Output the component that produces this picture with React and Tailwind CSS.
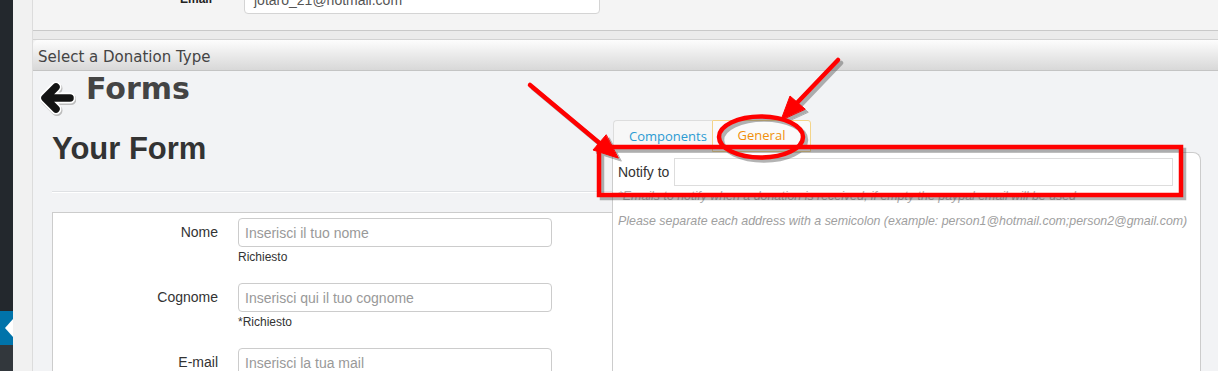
import React from "react";

// ─────────────────────────────────────
// Donation form builder screen + red annotation marks
// ─────────────────────────────────────

const sans = { fontFamily: '"Liberation Sans", Arial, sans-serif' };
const deja = { fontFamily: '"DejaVu Sans", Verdana, sans-serif' };
const open = { fontFamily: '"Open Sans", "Noto Sans", sans-serif' };

// red arrows / ellipse / box drawn over the screenshot
const Marks = ({ color }) => (
  <g stroke={color} fill={color} strokeLinecap="round" strokeLinejoin="round">
    <rect x="599" y="147" width="582" height="48" fill="none" strokeWidth="4.5" strokeLinecap="butt" strokeLinejoin="miter" />
    <ellipse cx="761" cy="137" rx="42" ry="20.5" fill="none" strokeWidth="4.5" />
    <line x1="530" y1="85" x2="603" y2="146" strokeWidth="4.5" />
    <polygon points="618,158 593,150 606,135" strokeWidth="1" />
    <line x1="838" y1="60" x2="795" y2="105" strokeWidth="4.5" />
    <polygon points="781,120 790,96 805,109" strokeWidth="1" />
  </g>
);

const BackArrow = () => (
  <svg className="block" width="38" height="36" viewBox="0 0 38 36">
    <g fill="none" strokeLinecap="round" strokeLinejoin="round">
      <path d="M32 17H8M18 6L7 17L18 28" stroke="#bdbdbd" strokeWidth="11" transform="translate(1 1.5)" />
      <path d="M32 17H8M18 6L7 17L18 28" stroke="#fff" strokeWidth="11" />
      <path d="M32 17H8M18 6L7 17L18 28" stroke="#141414" strokeWidth="7.5" />
    </g>
  </svg>
);

const Field = ({ label, placeholder, help }) => (
  <div className="flex items-start h-[65px]">
    <div className="w-[165px] h-[29px] flex items-center justify-end text-[14px] text-[#333]" style={sans}>
      {label}
    </div>
    <div className="ml-[20px] flex flex-col">
      <input
        placeholder={placeholder}
        className="w-[314px] h-[29px] px-[6px] bg-white border border-[#ccc] rounded-[4px] text-[14px] placeholder:text-[#999] outline-none"
        style={sans}
      />
      <p className="mt-[2px] h-[16px] text-[12px] leading-[16px] text-[#333]" style={sans}>
        {help}
      </p>
    </div>
  </div>
);

export default function App() {
  return (
    <div className="relative w-[1218px] h-[371px] overflow-hidden flex bg-[#f1f1f1]">
      {/* SIDEBAR admin */}
      <div className="w-[13px] shrink-0 flex flex-col bg-[#23282d]">
        <div className="h-[311px]" />
        <div className="h-[34px] bg-[#0073aa] flex items-center justify-end">
          <div className="w-0 h-0 border-y-[9px] border-y-transparent border-r-[8px] border-r-white" />
        </div>
        <div className="flex-1 bg-[#32373c]" />
      </div>

      <div className="ml-[19px] flex-1 min-w-0 flex flex-col border-l border-[#dcdcdc]">
        {/* TOP PANEL (email) */}
        <div className="h-[31px] shrink-0 flex items-start bg-[#f4f4f4] border-b border-[#c9c9c9]">
          <div className="w-[179px] -mt-[8px] text-right text-[12px] leading-[14px] font-bold text-[#222]" style={sans}>
            Email
          </div>
          <div className="ml-[32px] -mt-[15px] w-[356px] h-[29px] flex items-center pl-[9px] bg-white border border-[#d4d4d4] rounded-[4px] text-[14px] leading-[16px] text-[#555]" style={sans}>
            jotaro_21@hotmail.com
          </div>
        </div>
        <div className="h-[9px] shrink-0 bg-[#ebebeb] border-b border-[#d2d2d2]" />

        {/* DONATION PANEL */}
        <div className="h-[31px] shrink-0 rounded-tl-[5px] bg-gradient-to-b from-[#fdfdfd] to-[#d8d8d8] border-b border-[#c4c4c4] pl-[5px] pt-[8px]">
          <p className="text-[15px] leading-[18px] text-[#444]" style={deja}>
            Select a Donation Type
          </p>
        </div>

        <div className="flex-1 flex bg-[#f2f3f5]">
          {/* LEFT: form preview */}
          <div className="w-[579px] shrink-0 flex flex-col">
            <div className="h-[36px] flex items-start pl-[5px]">
              <div className="mt-[10px]">
                <BackArrow />
              </div>
              <h2 className="ml-[10px] text-[30px] leading-[36px] font-bold text-[#444]" style={deja}>
                Forms
              </h2>
            </div>
            <h1 className="mt-[25px] pl-[19px] text-[31px] leading-[34px] font-bold text-[#333]" style={sans}>
              Your Form
            </h1>
            <div className="mt-[25px] ml-[19px] h-[2px] border-t border-[#dfe1e4] bg-white" />
            <div className="mt-[19px] ml-[19px] flex-1 bg-white border-t border-l border-[#ccc] pt-[5px]">
              <Field label="Nome" placeholder="Inserisci il tuo nome" help="Richiesto" />
              <Field label="Cognome" placeholder="Inserisci qui il tuo cognome" help="*Richiesto" />
              <Field label="E-mail" placeholder="Inserisci la tua mail" help="" />
            </div>
          </div>

          {/* RIGHT: tabs + settings */}
          <div className="w-[589px] shrink-0 flex flex-col">
            <div className="mt-[49px] h-[32px] flex pl-[1px]">
              <div className="w-[99px] flex items-center pl-[15px] bg-[#f7f7f7] border-t border-l border-[#ddd] rounded-tl-[4px] text-[13px] text-[#2b9bd3]" style={open}>
                Components
              </div>
              <div className="w-[99px] flex items-center justify-center bg-[#fafafa] border border-[#f3d48a] rounded-tr-[3px] text-[13px] text-[#f0900a]" style={open}>
                General
              </div>
            </div>
            <div className="flex-1 bg-white border-t border-x border-[#ccc] rounded-tr-[8px] pt-[5px] pl-[5px]">
              <div className="flex items-center">
                <span className="w-[56px] text-[14px] text-[#333]" style={sans}>
                  Notify to
                </span>
                <input className="w-[499px] h-[28px] border border-[#ddd] bg-white outline-none" />
              </div>
              <p className="mt-[2px] whitespace-nowrap text-[12.4px] leading-[16px] italic text-[#aaa]" style={sans}>
                *Emails to notify when a donation is received, if empty the paypal email will be used
              </p>
              <p className="mt-[9px] whitespace-nowrap text-[12.4px] leading-[16px] italic text-[#a0a0a0]" style={sans}>
                Please separate each address with a semicolon (example: person1@hotmail.com;person2@gmail.com)
              </p>
            </div>
          </div>
        </div>
      </div>

      {/* ANNOTATIONS */}
      <svg className="absolute left-0 top-0 pointer-events-none" width="1218" height="371">
        <g transform="translate(3 3)" opacity="0.4">
          <Marks color="#444" />
        </g>
        <Marks color="#ff0000" />
      </svg>
    </div>
  );
}
